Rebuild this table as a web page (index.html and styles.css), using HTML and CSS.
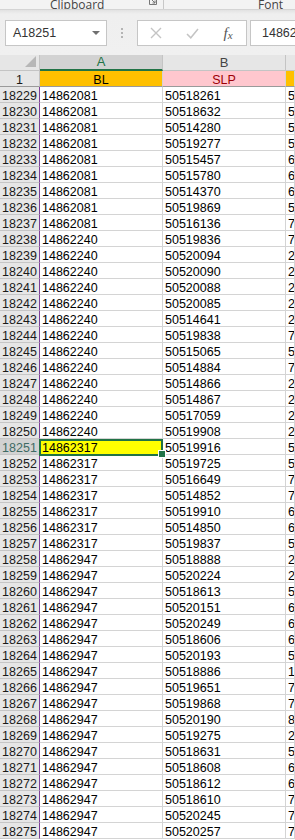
FILE: index.html
```html
<!DOCTYPE html>
<html>
<head>
<meta charset="utf-8">
<link rel="stylesheet" href="styles.css">
</head>
<body>
<div class="ribbon">
  <div class="group g-clip"><span class="glabel">Clipboard</span>
    <svg class="launcher" width="8" height="8" viewBox="0 0 8 8"><path d="M0.5 0.5 V7.5 H7.5 V0.5" fill="none" stroke="#777" stroke-width="1"/><path d="M2 2 L6 6 M6 3.5 V6 H3.5" fill="none" stroke="#777" stroke-width="1"/></svg>
  </div>
  <div class="gsep"></div>
  <div class="group g-font"><span class="glabel">Font</span></div>
</div>
<div class="fbar">
  <div class="namebox"><span class="nbtext">A18251</span><span class="dd"></span></div>
  <div class="dots"><i></i><i></i><i></i></div>
  <div class="fbtns">
    <svg class="fbtn" width="12" height="12" viewBox="0 0 12 12"><path d="M1 1 L11 11 M11 1 L1 11" stroke="#c4c4c4" stroke-width="1.4" fill="none"/></svg>
    <svg class="fbtn" width="13" height="11" viewBox="0 0 13 11"><path d="M1 6 L4.8 9.8 L12 1" stroke="#c4c4c4" stroke-width="1.5" fill="none"/></svg>
    <span class="fx">f<span class="fxx">x</span></span>
  </div>
  <div class="finput">14862317</div>
</div>
<div class="sheet">
  <div class="corner"><span class="tri"></span></div><div class="ch chsel">A</div><div class="ch">B</div><div class="ch chlast"></div>
  <div class="rh rh1">1</div><div class="c r1 orange ctr">BL</div><div class="c r1 pink ctr">SLP</div><div class="c r1 orange"></div>
  <div class="rh">18229</div><div class="c">14862081</div><div class="c">50518261</div><div class="c">5</div>
  <div class="rh">18230</div><div class="c">14862081</div><div class="c">50518632</div><div class="c">5</div>
  <div class="rh">18231</div><div class="c">14862081</div><div class="c">50514280</div><div class="c">5</div>
  <div class="rh">18232</div><div class="c">14862081</div><div class="c">50519277</div><div class="c">5</div>
  <div class="rh">18233</div><div class="c">14862081</div><div class="c">50515457</div><div class="c">6</div>
  <div class="rh">18234</div><div class="c">14862081</div><div class="c">50515780</div><div class="c">6</div>
  <div class="rh">18235</div><div class="c">14862081</div><div class="c">50514370</div><div class="c">6</div>
  <div class="rh">18236</div><div class="c">14862081</div><div class="c">50519869</div><div class="c">5</div>
  <div class="rh">18237</div><div class="c">14862081</div><div class="c">50516136</div><div class="c">7</div>
  <div class="rh">18238</div><div class="c">14862240</div><div class="c">50519836</div><div class="c">7</div>
  <div class="rh">18239</div><div class="c">14862240</div><div class="c">50520094</div><div class="c">2</div>
  <div class="rh">18240</div><div class="c">14862240</div><div class="c">50520090</div><div class="c">2</div>
  <div class="rh">18241</div><div class="c">14862240</div><div class="c">50520088</div><div class="c">2</div>
  <div class="rh">18242</div><div class="c">14862240</div><div class="c">50520085</div><div class="c">2</div>
  <div class="rh">18243</div><div class="c">14862240</div><div class="c">50514641</div><div class="c">2</div>
  <div class="rh">18244</div><div class="c">14862240</div><div class="c">50519838</div><div class="c">7</div>
  <div class="rh">18245</div><div class="c">14862240</div><div class="c">50515065</div><div class="c">5</div>
  <div class="rh">18246</div><div class="c">14862240</div><div class="c">50514884</div><div class="c">7</div>
  <div class="rh">18247</div><div class="c">14862240</div><div class="c">50514866</div><div class="c">2</div>
  <div class="rh">18248</div><div class="c">14862240</div><div class="c">50514867</div><div class="c">2</div>
  <div class="rh">18249</div><div class="c">14862240</div><div class="c">50517059</div><div class="c">2</div>
  <div class="rh">18250</div><div class="c">14862240</div><div class="c">50519908</div><div class="c">2</div>
  <div class="rh rhsel">18251</div><div class="c selcell">14862317</div><div class="c">50519916</div><div class="c">5</div>
  <div class="rh">18252</div><div class="c">14862317</div><div class="c">50519725</div><div class="c">5</div>
  <div class="rh">18253</div><div class="c">14862317</div><div class="c">50516649</div><div class="c">7</div>
  <div class="rh">18254</div><div class="c">14862317</div><div class="c">50514852</div><div class="c">7</div>
  <div class="rh">18255</div><div class="c">14862317</div><div class="c">50519910</div><div class="c">6</div>
  <div class="rh">18256</div><div class="c">14862317</div><div class="c">50514850</div><div class="c">6</div>
  <div class="rh">18257</div><div class="c">14862317</div><div class="c">50519837</div><div class="c">5</div>
  <div class="rh">18258</div><div class="c">14862947</div><div class="c">50518888</div><div class="c">2</div>
  <div class="rh">18259</div><div class="c">14862947</div><div class="c">50520224</div><div class="c">2</div>
  <div class="rh">18260</div><div class="c">14862947</div><div class="c">50518613</div><div class="c">5</div>
  <div class="rh">18261</div><div class="c">14862947</div><div class="c">50520151</div><div class="c">6</div>
  <div class="rh">18262</div><div class="c">14862947</div><div class="c">50520249</div><div class="c">6</div>
  <div class="rh">18263</div><div class="c">14862947</div><div class="c">50518606</div><div class="c">6</div>
  <div class="rh">18264</div><div class="c">14862947</div><div class="c">50520193</div><div class="c">5</div>
  <div class="rh">18265</div><div class="c">14862947</div><div class="c">50518886</div><div class="c">1</div>
  <div class="rh">18266</div><div class="c">14862947</div><div class="c">50519651</div><div class="c">7</div>
  <div class="rh">18267</div><div class="c">14862947</div><div class="c">50519868</div><div class="c">7</div>
  <div class="rh">18268</div><div class="c">14862947</div><div class="c">50520190</div><div class="c">8</div>
  <div class="rh">18269</div><div class="c">14862947</div><div class="c">50519275</div><div class="c">2</div>
  <div class="rh">18270</div><div class="c">14862947</div><div class="c">50518631</div><div class="c">5</div>
  <div class="rh">18271</div><div class="c">14862947</div><div class="c">50518608</div><div class="c">6</div>
  <div class="rh">18272</div><div class="c">14862947</div><div class="c">50518612</div><div class="c">6</div>
  <div class="rh">18273</div><div class="c">14862947</div><div class="c">50518610</div><div class="c">7</div>
  <div class="rh">18274</div><div class="c">14862947</div><div class="c">50520245</div><div class="c">7</div>
  <div class="rh">18275</div><div class="c">14862947</div><div class="c">50520257</div><div class="c">7</div>
</div>
</body>
</html>
```
FILE: styles.css
```css
html, body {
  margin: 0;
  padding: 0;
  background: #ffffff;
  overflow: hidden;
}
body {
  width: 295px;
  height: 840px;
  font-family: "Liberation Sans", Arial, sans-serif;
}

/* ribbon bottom strip */
.ribbon {
  box-sizing: border-box;
  height: 10px;
  background: #f3f3f3;
  border-bottom: 1px solid #d4d4d4;
  display: flex;
  align-items: flex-end;
  overflow: hidden;
}
.group {
  display: flex;
  align-items: flex-end;
  height: 9px;
}
.glabel {
  font-family: "Open Sans", "Liberation Sans", sans-serif;
  font-size: 12px;
  line-height: 16px;
  color: #444;
  margin-bottom: -4px;
}
.g-clip {
  width: 163px;
  padding-left: 50px;
  box-sizing: border-box;
  position: relative;
}
.launcher {
  margin-left: 45px;
  margin-bottom: 4px;
}
.gsep {
  width: 1px;
  height: 9px;
  background: #c8c8c8;
}
.g-font {
  padding-left: 94px;
}

/* formula bar */
.fbar {
  box-sizing: border-box;
  height: 45px;
  padding: 10px 0 0 5px;
  background: linear-gradient(#e2e2e2 0px, #efefef 4px, #f0f0f0 100%);
  display: flex;
  align-items: flex-start;
}
.namebox {
  box-sizing: border-box;
  width: 102px;
  height: 26px;
  background: #fff;
  border: 1px solid #c6c6c6;
  display: flex;
  align-items: center;
  justify-content: space-between;
  padding: 0 6px 0 7px;
}
.nbtext, .finput {
  font-size: 12.5px;
  color: #333;
}
.dd {
  width: 0;
  height: 0;
  border-left: 4px solid transparent;
  border-right: 4px solid transparent;
  border-top: 4px solid #707070;
}
.dots {
  width: 30px;
  height: 26px;
  display: flex;
  flex-direction: column;
  align-items: center;
  justify-content: center;
  gap: 2px;
}
.dots i {
  display: block;
  width: 2px;
  height: 2px;
  background: #b4b4b4;
}
.fbtns {
  box-sizing: border-box;
  width: 110px;
  height: 26px;
  background: #fff;
  border: 1px solid #c6c6c6;
  display: grid;
  grid-template-columns: 36px 36px 36px;
  align-items: center;
  justify-items: center;
}
.fx {
  font-family: "Liberation Serif", serif;
  font-style: italic;
  font-size: 15px;
  color: #555;
  line-height: 1;
}
.fxx {
  font-size: 11px;
  vertical-align: -1px;
}
.finput {
  box-sizing: border-box;
  flex: 1;
  margin-left: 3px;
  height: 26px;
  background: #fff;
  border: 1px solid #c6c6c6;
  border-right: none;
  padding-left: 11px;
  line-height: 24px;
  white-space: nowrap;
  overflow: hidden;
}

/* sheet */
.sheet {
  display: grid;
  grid-template-columns: 40px 123px 123px 1fr;
  font-size: 12.5px;
  color: #000;
}
.sheet > div {
  box-sizing: border-box;
  height: 16px;
  white-space: nowrap;
  overflow: hidden;
}
.corner, .ch {
  background: #e6e6e6;
  border-right: 1px solid #c4c4c4;
  border-bottom: 1px solid #c4c4c4;
  text-align: center;
  line-height: 15px;
  color: #444;
  font-size: 13px;
}
.corner {
  display: flex;
  justify-content: flex-end;
  align-items: flex-end;
  padding: 0 3px 3px 0;
}
.tri {
  width: 0;
  height: 0;
  border-left: 11px solid transparent;
  border-bottom: 11px solid #b7b7b7;
}
.ch.chsel {
  background: #d2d2d2;
  color: #217346;
  border-bottom: 2px solid #217346;
  line-height: 14px;
}
.ch.chlast {
  border-right: none;
}
.rh {
  background: #e6e6e6;
  border-right: 1px solid #7d3f98;
  border-bottom: 1px solid #c6c6c6;
  text-align: center;
  color: #1a1a1a;
  padding-top: 3px;
  line-height: 12px;
}
.rh.rh1 {
  border-right: 1px solid #c4c4c4;
  border-bottom: 1px solid #9a9a9a;
}
.rh.rhsel {
  background: #d2d2d2;
  color: #3f6a64;
}
.c {
  background: #fff;
  border-right: 1px solid #d4d4d4;
  border-bottom: 1px solid #d4d4d4;
  padding: 3px 0 0 2px;
  line-height: 12px;
}
.c.r1 {
  border-bottom: 1px solid #9a9a9a;
}
.ctr {
  text-align: center;
  padding-left: 0;
}
.orange {
  background: #ffc000;
}
.pink {
  background: #ffc7ce;
  color: #9c0006;
}
.sheet > .c.selcell {
  background: #ffff00;
  position: relative;
  overflow: visible;
}
.selcell::after {
  content: "";
  position: absolute;
  left: -1px;
  top: 0;
  width: 124px;
  height: 17px;
  box-sizing: border-box;
  border: 2px solid #217346;
  z-index: 2;
}
.selcell::before {
  content: "";
  position: absolute;
  right: -4px;
  bottom: -4px;
  width: 6px;
  height: 6px;
  background: #217346;
  border: 1px solid #fff;
  z-index: 3;
}
```
